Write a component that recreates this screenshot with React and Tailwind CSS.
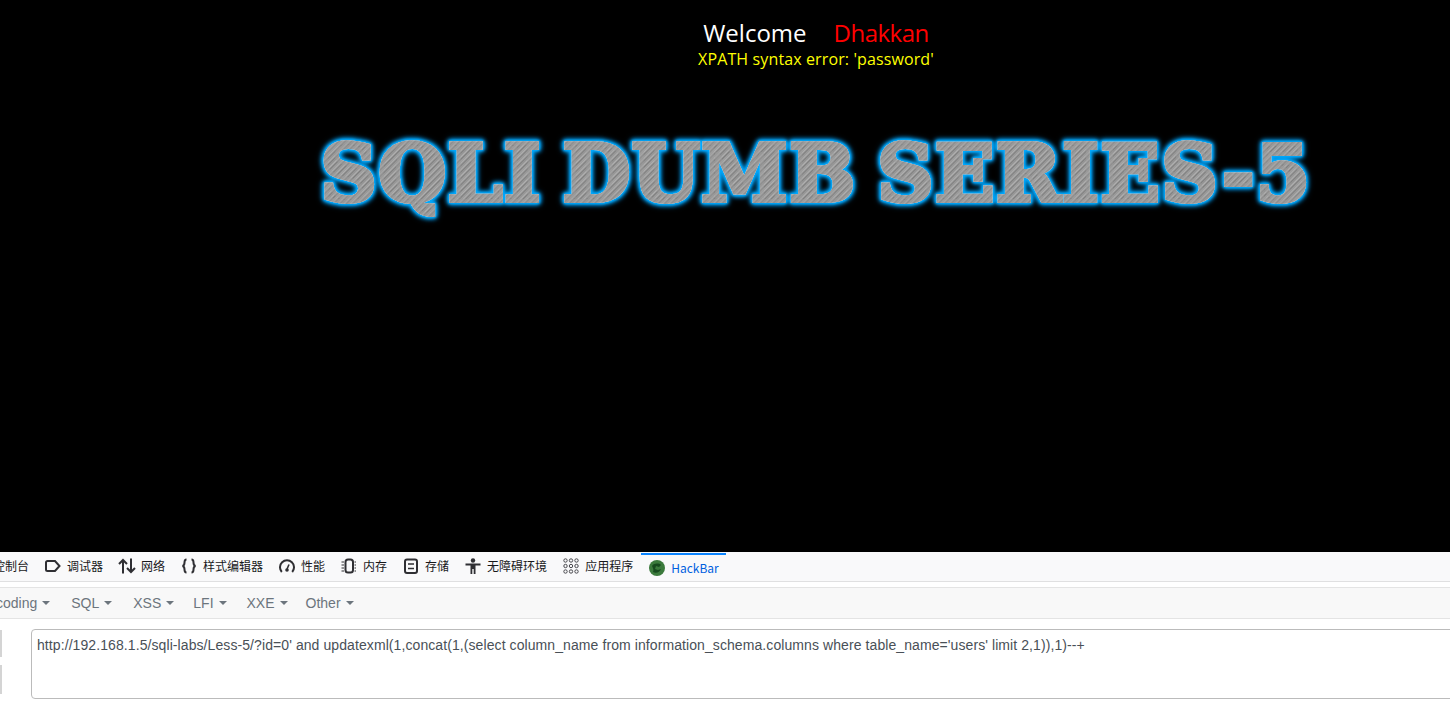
const tabIcon = 'text-[#2f2f33] shrink-0'

function Tab({ icon, label, className = '' }) {
  return (
    <div className={`flex items-center ${className}`}>
      {icon}
      <span>{label}</span>
    </div>
  )
}

function DebuggerIcon() {
  return (
    <svg width="16" height="16" viewBox="0 0 16 16" fill="none" stroke="currentColor" strokeWidth="2" className={tabIcon}>
      <path d="M2.500 3h7.500l4.500 5-4.500 5H2.500A1.500 1.500 0 0 1 1 11.500v-7A1.500 1.500 0 0 1 2.500 3z" />
    </svg>
  )
}

function NetworkIcon() {
  return (
    <svg width="18" height="16" viewBox="0 0 18 16" fill="none" stroke="currentColor" strokeWidth="2" className={tabIcon}>
      <path d="M5 15.500V2M1 6l4-4 4 4M13 .500V14M9 10l4 4 4-4" />
    </svg>
  )
}

function BracesIcon() {
  return (
    <svg width="16" height="16" viewBox="0 0 16 16" fill="none" stroke="currentColor" strokeWidth="2" className={tabIcon}>
      <path d="M5.500 1.500C3.500 1.500 3.500 3 3.500 4.500S3.500 7.500 1.500 8c2 .5 2 2 2 3.500s0 3 2 3M10.500 1.500c2 0 2 1.500 2 3s0 3 2 3.500c-2 .5-2 2-2 3.500s0 3-2 3" />
    </svg>
  )
}

function GaugeIcon() {
  return (
    <svg width="16" height="16" viewBox="0 0 16 16" fill="none" stroke="currentColor" strokeWidth="2" className={tabIcon}>
      <path d="M2.800 14A7 7 0 1 1 13.200 14" />
      <path d="M8 11 10 6.500" strokeWidth="1.600" />
      <circle cx="8" cy="12" r="1.800" fill="currentColor" stroke="none" />
    </svg>
  )
}

function MemoryIcon() {
  return (
    <svg width="16" height="16" viewBox="0 0 16 16" fill="none" stroke="currentColor" className={tabIcon}>
      <rect x="4.500" y="1.500" width="7.500" height="13" rx="2.500" strokeWidth="2" />
      <path d="M0.500 4h2.500M0.500 7h2.500M0.500 10h2.500M0.500 13h2.500M13.500 4H15M13.500 7H15M13.500 10H15M13.500 13H15" strokeWidth="1" />
    </svg>
  )
}

function StorageIcon() {
  return (
    <svg width="16" height="16" viewBox="0 0 16 16" fill="none" stroke="currentColor" strokeWidth="2" className={tabIcon}>
      <rect x="2" y="1.500" width="12" height="13.500" rx="2" />
      <path d="M5 6h6M5 10.500h6" strokeWidth="1.500" />
    </svg>
  )
}

function AccessibilityIcon() {
  return (
    <svg width="16" height="16" viewBox="0 0 16 16" fill="currentColor" className={tabIcon}>
      <circle cx="8" cy="2.500" r="2.200" />
      <path d="M.5 5.500h15v2h-5V16H8.700v-5H7.300v5H5.500V7.500h-5z" />
    </svg>
  )
}

function AppsIcon() {
  return (
    <svg width="16" height="16" viewBox="0 0 16 16" fill="none" stroke="#4a4a4f" strokeWidth="1" className="shrink-0">
      {[2.500, 8, 13.500].map((y) =>
        [2.500, 8, 13.500].map((x) => <circle key={`${x}-${y}`} cx={x} cy={y} r="1.700" />)
      )}
    </svg>
  )
}

function HackBarIcon() {
  return (
    <svg width="16" height="16" viewBox="0 0 16 16" className="shrink-0">
      <circle cx="8" cy="8" r="8" fill="#3b7a3c" />
      <path d="M3 6c2-3 7-3 9-1l-2 2-3-1-1 3 3 1 3-1c-1 3-5 5-8 3 1-2 0-4-1-6z" fill="#174a1e" />
    </svg>
  )
}

function Menu({ label, className = '' }) {
  return (
    <div className={`flex items-center gap-[5px] ${className}`}>
      <span>{label}</span>
      <span className="w-0 h-0 border-x-4 border-x-transparent border-t-4 border-t-[#6c757d]" />
    </div>
  )
}

export default function App() {
  return (
    <div className="h-[705px] w-full overflow-hidden flex flex-col bg-black">
      <div className="h-[552px] shrink-0 pl-[182px] flex flex-col items-center font-['Open_Sans','Noto_Sans',sans-serif]">
        <div className="mt-[17px] text-2xl leading-[32px] text-white whitespace-nowrap">
          Welcome<span className="ml-[27px] tracking-[-0.500px] text-[#ff0000]">Dhakkan</span>
        </div>
        <div className="text-[16px] leading-[20px] tracking-[0.120px] text-[#ffff00] whitespace-nowrap">XPATH syntax error: 'password'</div>
        <div className="mt-[55px] text-[78px] leading-[100px] font-bold whitespace-nowrap tracking-[1.500px] [word-spacing:-8px] font-['DejaVu_Serif',serif] text-transparent bg-clip-text bg-[repeating-linear-gradient(135deg,#929292_0px,#b0b0b0_1.500px,#7e7e7e_3px,#a2a2a2_4.500px)] [-webkit-text-stroke:4px_#9c9c9c80] [filter:drop-shadow(0_0_0.5px_#e8f4fa)_drop-shadow(0_0_1px_#00aaff)_drop-shadow(0_0_1px_#00aaff)_drop-shadow(0_0_2px_#00aaff)_drop-shadow(0_0_2px_#0090e0)]">
          SQLI DUMB SERIES-5
        </div>
      </div>

      <div className="flex-1 bg-white font-['Liberation_Sans','Noto_Sans_CJK_SC',sans-serif]">
        <div className="h-[30px] bg-[#f9f9fa] border-b border-[#e0e0e1] flex items-center pb-[1px] text-[12px] text-[#18181a] whitespace-nowrap font-['Noto_Sans_CJK_SC',sans-serif]">
          <span className="ml-[-7px]">控制台</span>
          <Tab icon={<DebuggerIcon />} label="调试器" className="ml-[16px] gap-[6px]" />
          <Tab icon={<NetworkIcon />} label="网络" className="ml-[15px] gap-[5px]" />
          <Tab icon={<BracesIcon />} label="样式编辑器" className="ml-[16px] gap-[6px]" />
          <Tab icon={<GaugeIcon />} label="性能" className="ml-[16px] gap-[6px]" />
          <Tab icon={<MemoryIcon />} label="内存" className="ml-[16px] gap-[6px]" />
          <Tab icon={<StorageIcon />} label="存储" className="ml-[16px] gap-[6px]" />
          <Tab icon={<AccessibilityIcon />} label="无障碍环境" className="ml-[16px] gap-[6px]" />
          <Tab icon={<AppsIcon />} label="应用程序" className="ml-[16px] gap-[6px]" />
          <div className="ml-[8px] self-start mt-[1px] h-[27px] w-[85px] border-t-2 border-[#0a84ff] flex items-center gap-[6px] pl-[8px] text-[#0060df]">
            <HackBarIcon />
            <span>HackBar</span>
          </div>
        </div>

        <div className="mt-[5px] h-[32px] bg-[#f8f8f8] border-y border-[#e4e4e4] flex items-center text-[14px] text-[#6c757d] whitespace-nowrap">
          <Menu label="coding" className="ml-[-4px]" />
          <Menu label="SQL" className="ml-[21px]" />
          <Menu label="XSS" className="ml-[21px]" />
          <Menu label="LFI" className="ml-[19px]" />
          <Menu label="XXE" className="ml-[20px]" />
          <Menu label="Other" className="ml-[18px]" />
        </div>

        <div className="mt-[10px] flex">
          <div className="w-[2px] shrink-0 mr-[29px] flex flex-col gap-[8px] pt-[1px]">
            <div className="h-[27px] bg-[#d4d4d4]" />
            <div className="h-[29px] bg-[#d4d4d4]" />
          </div>
          <div className="h-[70px] w-[1500px] shrink-0 border border-[#bbbbbb] rounded-[4px] px-[5px] py-[6px] text-[14px] leading-[18px] tracking-[0.085px] text-[#495057] whitespace-nowrap">
            http://192.168.1.5/sqli-labs/Less-5/?id=0' and updatexml(1,concat(1,(select column_name from information_schema.columns where table_name='users' limit 2,1)),1)--+
          </div>
        </div>
      </div>
    </div>
  )
}
